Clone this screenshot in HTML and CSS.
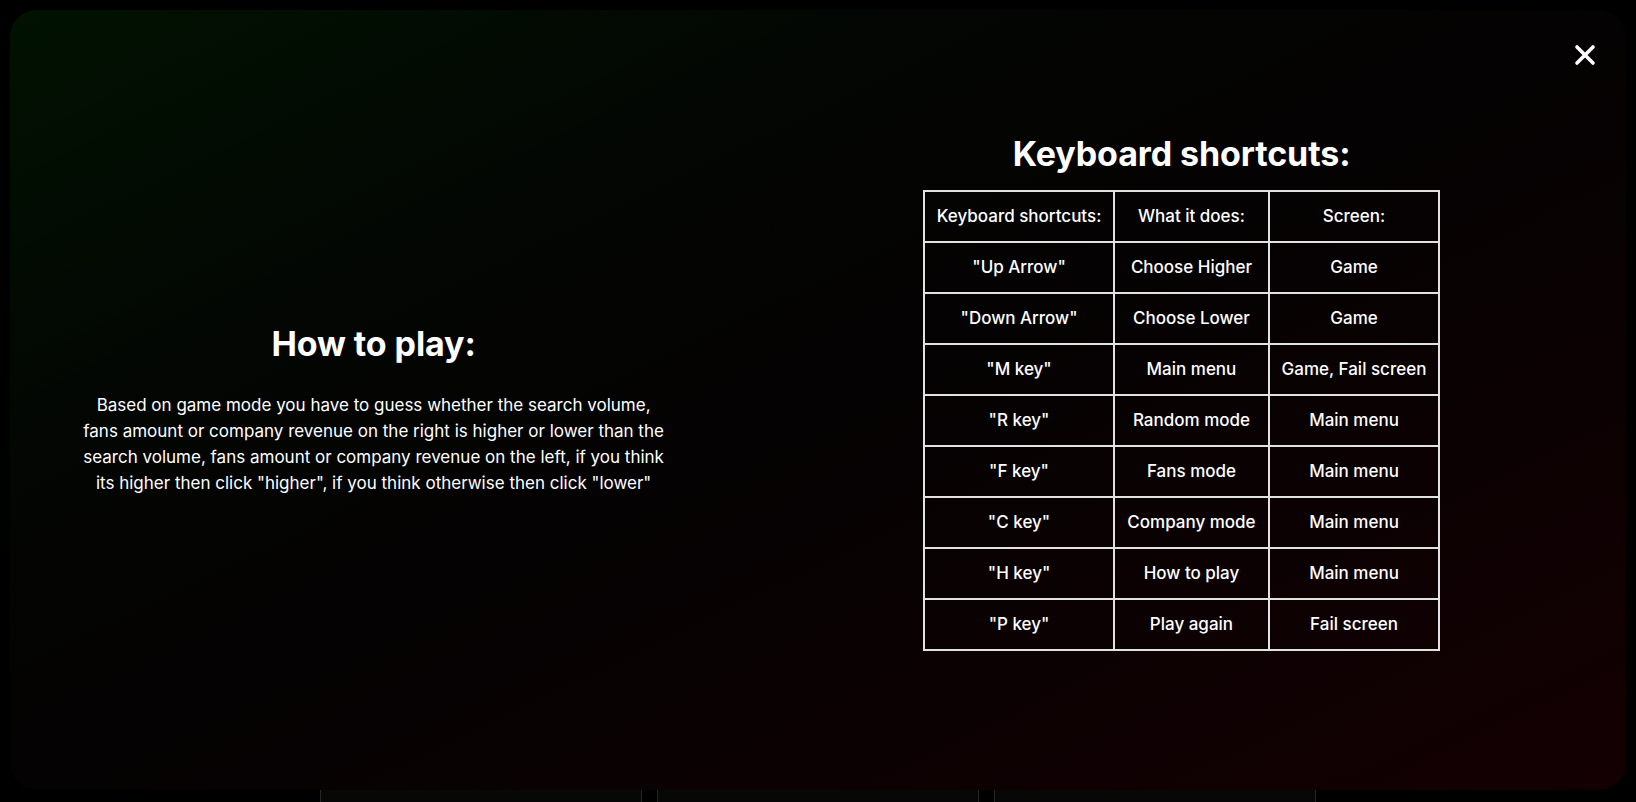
FILE: index.html
```html
<!DOCTYPE html>
<html lang="en">
<head>
<meta charset="utf-8">
<title>How to play</title>
<link rel="stylesheet" href="styles.css">
</head>
<body>
  <main class="page">
    <div class="cards">
      <div class="card"></div>
      <div class="card"></div>
      <div class="card"></div>
    </div>
  </main>

  <div class="modal">
    <button class="close" aria-label="Close">
      <svg viewBox="0 0 22 22" width="22" height="22">
        <path d="M3 3 L19 19 M19 3 L3 19" stroke="#fff" stroke-width="3.6" stroke-linecap="round" fill="none"/>
      </svg>
    </button>

    <section class="col col-left">
      <h2 class="heading">How to play:</h2>
      <p class="desc">Based on game mode you have to guess whether the search volume,<br>fans amount or company revenue on the right is higher or lower than the<br>search volume, fans amount or company revenue on the left, if you think<br>its higher then click "higher", if you think otherwise then click "lower"</p>
    </section>

    <section class="col col-right">
      <h2 class="heading">Keyboard shortcuts:</h2>
      <table class="keys">
        <tr><td>Keyboard shortcuts:</td><td>What it does:</td><td>Screen:</td></tr>
        <tr><td>"Up Arrow"</td><td>Choose Higher</td><td>Game</td></tr>
        <tr><td>"Down Arrow"</td><td>Choose Lower</td><td>Game</td></tr>
        <tr><td>"M key"</td><td>Main menu</td><td>Game, Fail screen</td></tr>
        <tr><td>"R key"</td><td>Random mode</td><td>Main menu</td></tr>
        <tr><td>"F key"</td><td>Fans mode</td><td>Main menu</td></tr>
        <tr><td>"C key"</td><td>Company mode</td><td>Main menu</td></tr>
        <tr><td>"H key"</td><td>How to play</td><td>Main menu</td></tr>
        <tr><td>"P key"</td><td>Play again</td><td>Fail screen</td></tr>
      </table>
    </section>
  </div>
</body>
</html>
```
FILE: styles.css
```css
* { box-sizing: border-box; }

html, body {
  margin: 0;
  height: 100%;
}

body {
  background: #000;
  color: #fff;
  font-family: "Inter", "Noto Sans", sans-serif;
  overflow: hidden;
}

.page {
  height: 100%;
  display: flex;
  flex-direction: column;
  justify-content: flex-end;
}

.cards {
  display: flex;
  justify-content: center;
  gap: 15px;
  height: 220px;
  margin-bottom: -40px;
}

.card {
  width: 322px;
  background: #070707;
  border-left: 1px solid #262626;
  border-right: 1px solid #262626;
}

.modal {
  position: fixed;
  top: 10px;
  left: 10px;
  right: 10px;
  bottom: 12px;
  border-radius: 27px;
  background: linear-gradient(to bottom right, #011201 0%, #030603 28%, #040202 50%, #0c0102 75%, #140003 100%);
  display: flex;
  align-items: center;
}

.close {
  position: absolute;
  top: 34px;
  right: 30px;
  width: 22px;
  height: 22px;
  padding: 0;
  border: 0;
  background: none;
  cursor: pointer;
  display: flex;
}

.col {
  display: flex;
  flex-direction: column;
  align-items: center;
  text-align: center;
}

.col-left {
  width: 45%;
  padding-top: 20px;
}

.col-right {
  width: 55%;
  padding-bottom: 16px;
}

.heading {
  margin: 0;
  font-size: 34px;
  line-height: 40px;
  font-weight: 700;
  letter-spacing: -0.1px;
}

.col-left .heading {
  margin-bottom: 28px;
}

.col-right .heading {
  margin-bottom: 16px;
}

.desc {
  margin: 0;
  font-size: 17px;
  line-height: 26px;
  font-weight: 400;
}

.keys {
  border-collapse: collapse;
  border: 2px solid #e2e2e2;
}

.keys td {
  border: 2px solid #e2e2e2;
  padding: 12px 12px;
  height: 51px;
  font-size: 17px;
  line-height: 24px;
  font-weight: 500;
  text-align: center;
  white-space: nowrap;
}
```
